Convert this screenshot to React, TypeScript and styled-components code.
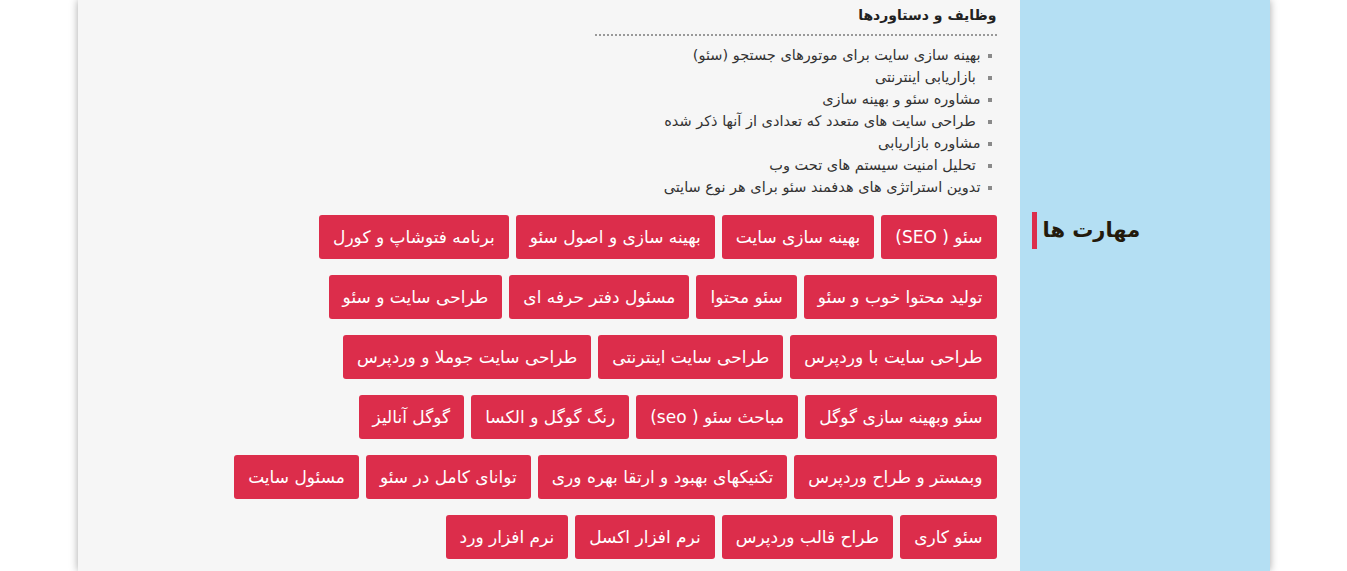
import styled, { createGlobalStyle } from "styled-components"

const GlobalStyle = createGlobalStyle`
  html, body {
    margin: 0;
    padding: 0;
    background: #ffffff;
  }
  body {
    font-family: "DejaVu Sans", "Noto Sans", sans-serif;
  }
`

const duties = [
  "بهینه سازی سایت برای موتورهای جستجو (سئو)",
  "\u00a0بازاریابی اینترنتی",
  "مشاوره سئو و بهینه سازی",
  "\u00a0طراحی سایت های متعدد که تعدادی از آنها ذکر شده",
  "مشاوره بازاریابی",
  "\u00a0تحلیل امنیت سیستم های تحت وب",
  "تدوین استراتژی های هدفمند سئو برای هر نوع سایتی",
]

// rows of skills, kept as in the original wrapping
const skillRows = [
  ["سئو ( SEO)", "بهینه سازی سایت", "بهینه سازی و اصول سئو", "برنامه فتوشاپ و کورل"],
  ["تولید محتوا خوب و سئو", "سئو محتوا", "مسئول دفتر حرفه ای", "طراحی سایت و سئو"],
  ["طراحی سایت با وردپرس", "طراحی سایت اینترنتی", "طراحی سایت جوملا و وردپرس"],
  ["سئو وبهینه سازی گوگل", "مباحث سئو ( seo)", "رنگ گوگل و الکسا", "گوگل آنالیز"],
  ["وبمستر و طراح وردپرس", "تکنیکهای بهبود و ارتقا بهره وری", "توانای کامل در سئو", "مسئول سایت"],
  ["سئو کاری", "طراح قالب وردپرس", "نرم افزار اکسل", "نرم افزار ورد"],
]

export default function App() {
  return (
    <>
      <GlobalStyle />
      <Page>
        {/* ردیف وظایف */}
        <SideCell />
        <MainCell $top="3px" $bottom="14px">
          <DutyBlock>
            <DutyTitle>وظایف و دستاوردها</DutyTitle>
            <DutyList>
              {duties.map((d, i) => (
                <DutyItem key={i}>{d}</DutyItem>
              ))}
            </DutyList>
          </DutyBlock>
        </MainCell>

        {/* ردیف مهارت ها */}
        <SideCell>
          <SideTitle>مهارت ها</SideTitle>
        </SideCell>
        <MainCell $top="3px" $bottom="12px">
          <SkillRows>
            {skillRows.map((row, i) => (
              <SkillRow key={i}>
                {row.map((s) => (
                  <SkillTag key={s}>{s}</SkillTag>
                ))}
              </SkillRow>
            ))}
          </SkillRows>
        </MainCell>
      </Page>
    </>
  )
}

const Page = styled.div`
  direction: rtl;
  width: 1192px;
  margin: 0 auto;
  display: grid;
  grid-template-columns: 250px 1fr;
  box-shadow: 0 0 8px rgba(0, 0, 0, 0.35);
  min-height: 571px;
`

const SideCell = styled.div`
  background: #b4dff3;
  display: flex;
  justify-content: flex-end;
  align-items: flex-start;
  padding-left: 12px;
`

const MainCell = styled.div<{ $top: string; $bottom: string }>`
  background: #f6f6f6;
  padding: ${(p) => p.$top} 23px ${(p) => p.$bottom} 0;
`

const DutyBlock = styled.div`
  width: 402px;
`

const DutyTitle = styled.h3`
  margin: 0;
  font-size: 14px;
  font-weight: 700;
  line-height: 24px;
  color: #222;
  padding-bottom: 7px;
  border-bottom: 2px dotted #999;
`

const DutyList = styled.ul`
  list-style: none;
  margin: 8px 0 0;
  padding: 0;
`

const DutyItem = styled.li`
  font-size: 14.5px;
  line-height: 22px;
  color: #333;
  white-space: pre;

  &::before {
    content: "";
    display: inline-block;
    width: 4px;
    height: 4px;
    background: #8a8a8a;
    margin-left: 7px;
    margin-right: 5px;
    vertical-align: middle;
  }
`

const SideTitle = styled.h2`
  margin: 0;
  font-size: 21px;
  font-weight: 700;
  line-height: 37px;
  color: #231a0c;
  border-left: 5px solid #dc2d4b;
  padding-left: 6px;
`

const SkillRows = styled.div`
  display: flex;
  flex-direction: column;
  gap: 16px;
`

const SkillRow = styled.div`
  display: flex;
  gap: 7px;
`

const SkillTag = styled.span`
  display: inline-block;
  height: 44px;
  line-height: 44px;
  padding: 0 14px;
  background: #dc2d4b;
  color: #ffffff;
  font-size: 17px;
  border-radius: 3px;
  white-space: nowrap;
`
